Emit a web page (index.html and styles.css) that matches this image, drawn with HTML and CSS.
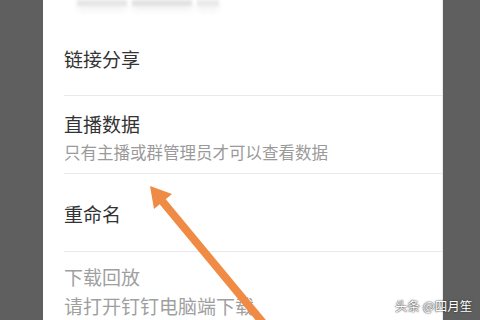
FILE: index.html
```html
<!DOCTYPE html>
<html lang="zh">
<head>
<meta charset="utf-8">
<link rel="stylesheet" href="styles.css">
</head>
<body>
<div class="screen">
  <div class="gutter-left"></div>
  <div class="panel">
    <div class="blur-head">
      <span class="blur b1"></span><span class="blur b2"></span><span class="blur b3"></span>
    </div>
    <div class="item single first">链接分享</div>
    <div class="item double">
      <div class="title">直播数据</div>
      <div class="sub">只有主播或群管理员才可以查看数据</div>
    </div>
    <div class="item single third">重命名</div>
    <div class="item last">
      <div class="title muted">下载回放</div>
      <div class="sub2">请打开钉钉电脑端下载</div>
    </div>
  </div>
  <div class="gutter-right"></div>
</div>
<svg class="arrow" width="480" height="320" viewBox="0 0 480 320">
  <line x1="264" y1="324" x2="158" y2="196" stroke="#ef8b45" stroke-width="8"/>
  <polygon points="150,186 172,194 154,209" fill="#ef8b45"/>
</svg>
<div class="watermark">头条 @四月笙</div>
</body>
</html>
```

FILE: styles.css
```css
html, body {
  margin: 0;
  padding: 0;
}
body {
  width: 480px;
  height: 320px;
  overflow: hidden;
  background: #5e5f5e;
  font-family: "Noto Sans CJK SC", "Noto Sans", sans-serif;
  position: relative;
}
.screen {
  display: flex;
  height: 320px;
}
.gutter-left {
  width: 43px;
  flex: none;
}
.panel {
  width: 400px;
  flex: none;
  background: #ffffff;
  padding-left: 21px;
  box-sizing: border-box;
  border-right: 1px solid #e9e9e9;
}
.gutter-right {
  flex: 1;
}
.blur-head {
  height: 20px;
  display: flex;
  gap: 5px;
  padding-left: 13px;
  align-items: flex-start;
  filter: blur(1.5px);
}
.blur {
  display: block;
  height: 6px;
  background: #e3e3e3;
  box-shadow: 0 4px 6px #f0f0f0;
}
.b1 { width: 50px; background: #e6e6e6; }
.b2 { width: 60px; background: #e2e2e2; }
.b3 { width: 22px; background: #e9e9e9; }
.item {
  border-bottom: 1px solid #e9e9e9;
  color: #333333;
  font-size: 19px;
  line-height: 24px;
}
.first {
  height: 76px;
  box-sizing: border-box;
  padding-top: 27px;
}
.double {
  padding-top: 16px;
  padding-bottom: 9px;
}
.sub {
  font-size: 16.5px;
  color: #9a9a9a;
  line-height: 24px;
  margin-top: 4px;
}
.third {
  padding-top: 28px;
  padding-bottom: 25px;
}
.last {
  border-bottom: none;
  padding-top: 13px;
}
.muted {
  color: #9f9f9f;
}
.sub2 {
  color: #9f9f9f;
  margin-top: 5px;
}
.arrow {
  position: absolute;
  left: 0;
  top: 0;
}
.watermark {
  position: absolute;
  left: 395px;
  top: 298px;
  white-space: nowrap;
  color: #ffffff;
  font-size: 12.5px;
  line-height: 16px;
  text-shadow: 0 0 2px #333, 0 0 1px #333;
}
```
